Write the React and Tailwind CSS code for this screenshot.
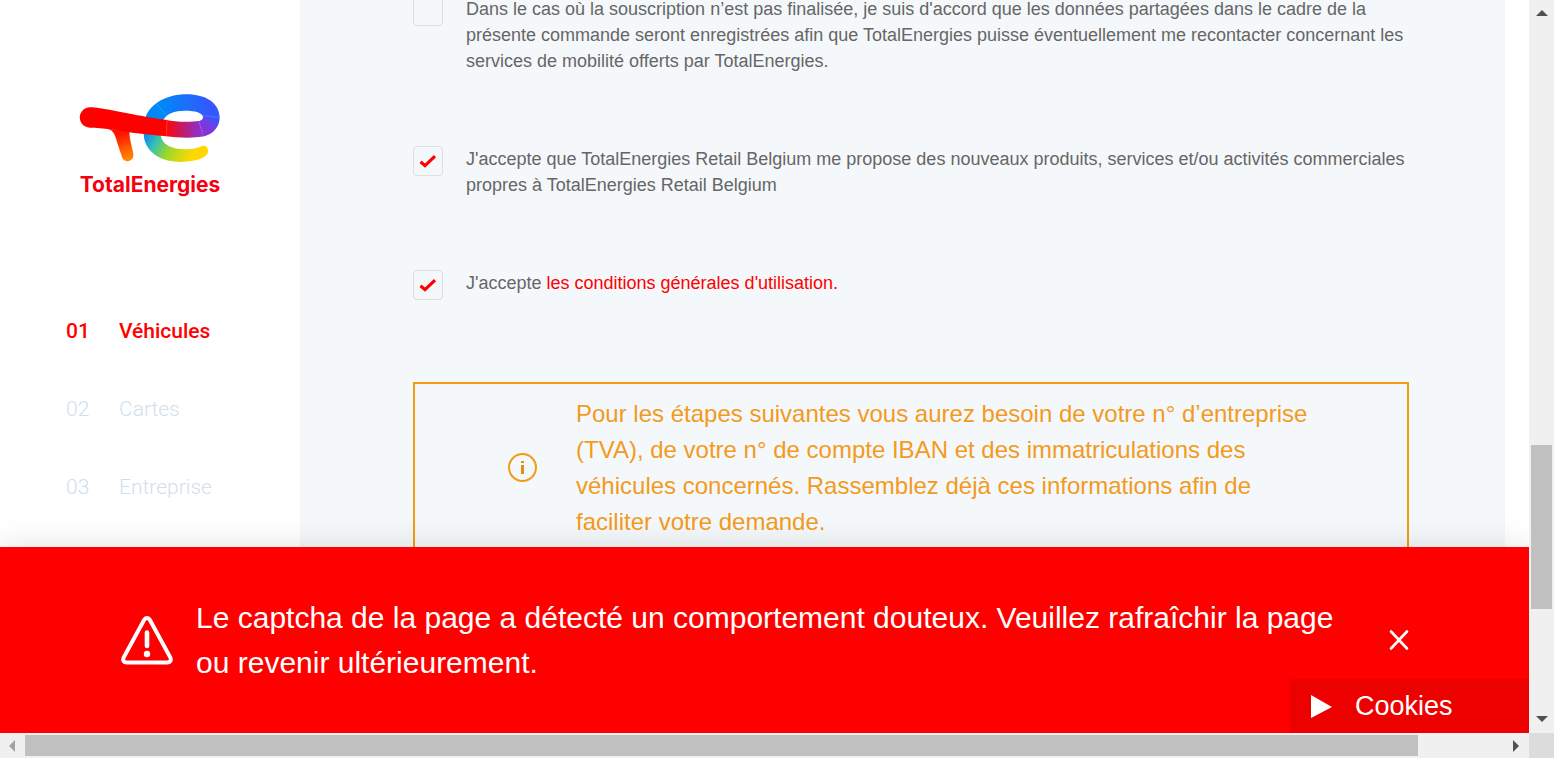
const steps = [
  { number: '01', label: 'Véhicules', active: true },
  { number: '02', label: 'Cartes' },
  { number: '03', label: 'Entreprise' },
];

function Logo() {
  return (
    <a href="#accueil" className="flex flex-col items-center gap-2">
      <svg width="142" height="68" viewBox="58 42 426 204" aria-hidden="true">
        <defs>
          <linearGradient id="leg" x1="180" y1="165" x2="205" y2="240" gradientUnits="userSpaceOnUse">
            <stop offset="0" stopColor="#ff1500" />
            <stop offset="0.6" stopColor="#ff5f00" />
            <stop offset="1" stopColor="#ff8a00" />
          </linearGradient>
          <linearGradient id="top" x1="310" y1="90" x2="450" y2="70" gradientUnits="userSpaceOnUse">
            <stop offset="0" stopColor="#0088f8" />
            <stop offset="1" stopColor="#3457ff" />
          </linearGradient>
          <linearGradient id="right" x1="462" y1="108" x2="428" y2="150" gradientUnits="userSpaceOnUse">
            <stop offset="0" stopColor="#3457ff" />
            <stop offset="0.45" stopColor="#6a40ea" />
            <stop offset="1" stopColor="#8833d0" />
          </linearGradient>
          <linearGradient id="bar" x1="320" y1="0" x2="424" y2="0" gradientUnits="userSpaceOnUse">
            <stop offset="0" stopColor="#ff0505" />
            <stop offset="0.5" stopColor="#be1c6e" />
            <stop offset="1" stopColor="#8a32d4" />
          </linearGradient>
          <linearGradient id="bottom" x1="258" y1="165" x2="400" y2="245" gradientUnits="userSpaceOnUse">
            <stop offset="0" stopColor="#0a8cf0" />
            <stop offset="0.22" stopColor="#35bfb4" />
            <stop offset="0.5" stopColor="#9bd62c" />
            <stop offset="0.75" stopColor="#d6da12" />
            <stop offset="0.95" stopColor="#ffd800" />
          </linearGradient>
        </defs>
        <path d="M252 160C252 210 296 246 362 246C392 246 420 240 436 229C453 218 445 194 428 198C416 203 402 208 378 208C336 208 306 194 303 165Z" fill="url(#bottom)" />
        <path d="M257 114C272 68 325 43 380 43C440 43 480 70 480 114L430 111C428 98 408 92 375 92C345 92 322 100 309 122Z" fill="url(#top)" />
        <path d="M480 112C480 140 462 163 429 170L417 124C426 121 431 116 430 110Z" fill="url(#right)" />
        <path d="M320 120C346 126 389 127 418 123L430 169C402 176 350 173 319 169Z" fill="url(#bar)" />
        <path d="M142 146C165 150 168 172 174 192L187 231C194 252 224 246 221 222C218 202 210 184 209 154Z" fill="url(#leg)" />
        <path d="M92 82C122 82 190 99 258 110Q290 116 322 120L320 169Q270 165 207 157C175 151 130 143 91 143C50 141 50 84 92 82Z" fill="#f00" />
        <path d="M290 70L320 106M430 107L480 112M418 124L430 164M322 121L320 168" stroke="#fff" strokeOpacity="0.25" strokeWidth="2" fill="none" />
      </svg>
      <span className="font-['Inter',sans-serif] text-[21px] leading-[30px] font-bold text-[#f50010]">TotalEnergies</span>
    </a>
  );
}

function Consent({ id, checked, children }) {
  return (
    <div className="flex items-start gap-[23px]">
      <span className="relative size-[30px] shrink-0">
        <input
          id={id}
          type="checkbox"
          defaultChecked={checked}
          className="peer block size-full appearance-none rounded border border-[#dcdfe1] bg-[#f5f8fb]"
        />
        <svg viewBox="0 0 30 30" className="pointer-events-none absolute inset-0 hidden size-full peer-checked:block" aria-hidden="true">
          <path d="M7.5 15.8L12 19.6L22 10.2" fill="none" stroke="#f00" strokeWidth="3.2" />
        </svg>
      </span>
      <label htmlFor={id} className="text-lg leading-[26px] text-[#666]">
        {children}
      </label>
    </div>
  );
}

function Arrow({ points, color = '#505050' }) {
  return (
    <svg width="12" height="12" viewBox="0 0 12 12" aria-hidden="true" className="shrink-0">
      <polygon points={points} fill={color} />
    </svg>
  );
}

export default function App() {
  return (
    <div className="flex h-screen flex-col overflow-hidden bg-white font-['Liberation_Sans',Arial,sans-serif]">
      <div className="flex min-h-0 flex-1">
        <div className="relative flex min-w-0 flex-1 overflow-hidden pr-6">
          <aside className="flex w-[300px] shrink-0 flex-col items-center pt-[94px]">
            <Logo />
            <nav className="w-full pt-[116px] pl-[66px]">
              <ol className="flex flex-col gap-12">
                {steps.map((step) => (
                  <li key={step.number}>
                    <a
                      href={`#etape-${step.number}`}
                      className={
                        step.active
                          ? "flex font-['Roboto',sans-serif] text-[21px] leading-[30px] font-medium text-[#f00]"
                          : "flex font-['Roboto',sans-serif] text-[21px] leading-[30px] font-light text-[#cfdfec]"
                      }
                    >
                      <span className="w-[53px]">{step.number}</span>
                      <span>{step.label}</span>
                    </a>
                  </li>
                ))}
              </ol>
            </nav>
          </aside>

          <main className="min-w-0 flex-1 bg-[#f4f8fb] pr-24 pl-[113px]">
            <form className="-mt-1 flex flex-col gap-[72px]">
              <Consent id="recontact">
                Dans le cas où la souscription n’est pas finalisée, je suis d'accord que les données partagées dans le
                cadre de la présente commande seront enregistrées afin que TotalEnergies puisse éventuellement me
                recontacter concernant les services de mobilité offerts par TotalEnergies.
              </Consent>
              <Consent id="offres" checked>
                J'accepte que TotalEnergies Retail Belgium me propose des nouveaux produits, services et/ou activités
                commerciales propres à TotalEnergies Retail Belgium
              </Consent>
              <Consent id="conditions" checked>
                J'accepte{' '}
                <a href="#conditions-generales" className="text-[#f00]">
                  les conditions générales d'utilisation.
                </a>
              </Consent>
            </form>
            <section className="mt-[82px] flex items-center border-2 border-[#f39c12] py-3 pr-20 pl-[93px]">
              <svg width="30" height="30" viewBox="0 0 30 30" className="mr-[38px] shrink-0" aria-hidden="true">
                <circle cx="14.5" cy="14.5" r="13.5" fill="none" stroke="#f39c12" strokeWidth="2" />
                <path d="M13 8h3v2h-3zM13 12h3v9h-3z" fill="#e0900f" />
              </svg>
              <p className="text-2xl leading-9 text-[#f39a20]">
                Pour les étapes suivantes vous aurez besoin de votre n° d’entreprise (TVA), de votre n° de compte IBAN et
                des immatriculations des véhicules concernés. Rassemblez déjà ces informations afin de faciliter votre
                demande.
              </p>
            </section>
          </main>

          <div
            role="alert"
            className="absolute inset-x-0 bottom-0 flex h-[186px] items-center bg-[#f00] pr-[119px] pl-[120px] text-white shadow-[0_0_30px_rgba(0,0,0,0.12)]"
          >
            <svg width="54" height="50" viewBox="0 0 54 50" className="mr-[22px] shrink-0" fill="none" stroke="#fff" strokeLinecap="round" strokeLinejoin="round" aria-hidden="true">
              <path d="M24.2 4.8Q27 1.4 29.8 4.8L50.4 42.6Q52 47 47.6 47.4H6.4Q2 47 3.6 42.6Z" strokeWidth="4" />
              <path d="M27 17.5V31" strokeWidth="4.6" />
              <circle cx="27" cy="39" r="3.2" fill="#fff" stroke="none" />
            </svg>
            <p className="flex-1 pr-10 text-[30px] leading-[45px]">
              Le captcha de la page a détecté un comportement douteux. Veuillez rafraîchir la page ou revenir
              ultérieurement.
            </p>
            <button type="button" aria-label="Fermer" className="shrink-0">
              <svg width="22" height="22" viewBox="0 0 22 22" aria-hidden="true">
                <path d="M3 2.5L19 19.5M19 2.5L3 19.5" stroke="#fff" strokeWidth="2.6" strokeLinecap="round" />
              </svg>
            </button>
          </div>

          <button
            type="button"
            className="absolute right-0 bottom-0 flex h-[54px] w-[239px] items-center gap-[23px] bg-[#ed0000] pl-[21px] text-[27px] leading-9 text-white"
          >
            <svg width="21" height="24" viewBox="0 0 21 24" aria-hidden="true">
              <polygon points="0,1 21,13 0,24" fill="#fff" />
            </svg>
            Cookies
          </button>
        </div>

        <div className="flex w-[25px] shrink-0 flex-col items-center bg-[#f0f0f0] px-0.5 py-2" aria-hidden="true">
          <Arrow points="0,8 6,2 12,8" />
          <div className="flex min-h-0 w-full flex-1 flex-col">
            <div className="grow-[425]" />
            <div className="w-full grow-[164] bg-[#c0c0c0]" />
            <div className="grow-[104]" />
          </div>
          <Arrow points="0,3 12,3 6,9" />
        </div>
      </div>

      <div className="flex h-[25px] shrink-0 bg-[#f0f0f0]" aria-hidden="true">
        <div className="flex min-w-0 flex-1 items-center px-[7px]">
          <Arrow points="8,0 8,12 2,6" color="#a3a3a3" />
          <div className="ml-1.5 flex h-[21px] min-w-0 flex-1">
            <div className="grow-[1393] bg-[#c0c0c0]" />
            <div className="grow-[92]" />
          </div>
          <Arrow points="3,0 9,6 3,12" />
        </div>
        <div className="w-[25px] bg-[#dcdcdc]" />
      </div>
    </div>
  );
}
